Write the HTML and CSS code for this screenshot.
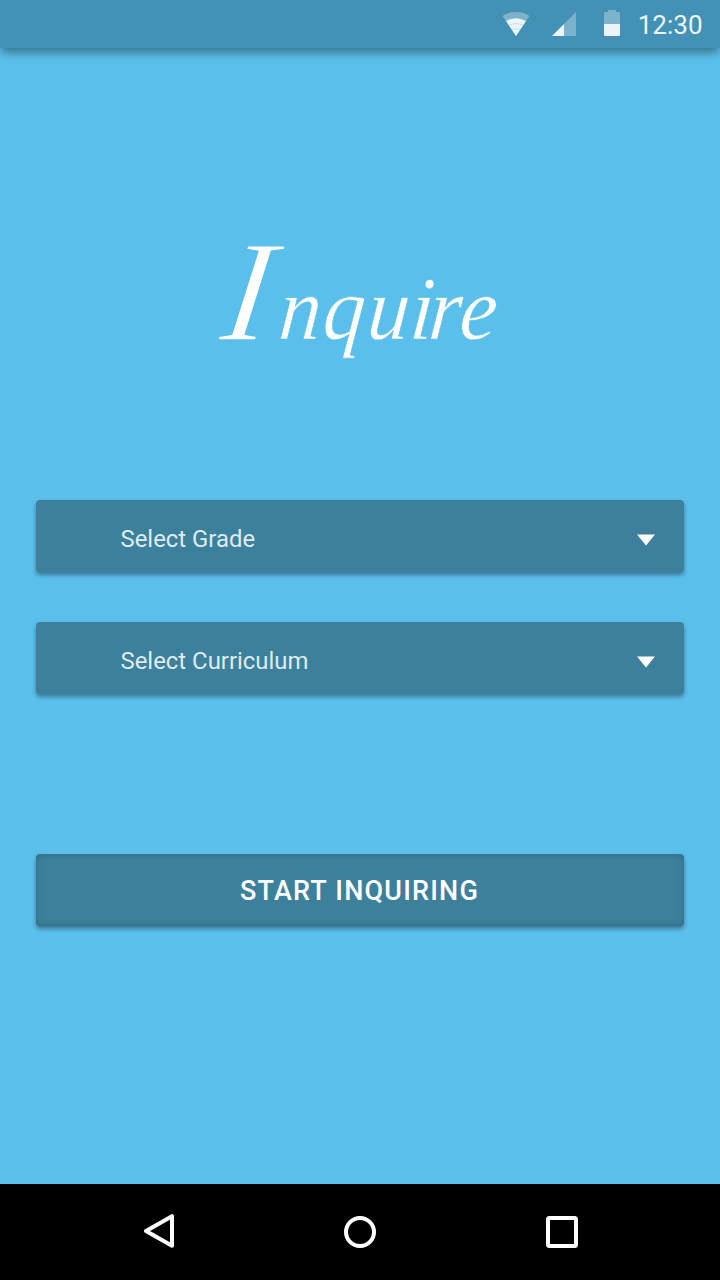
FILE: index.html
```html
<!DOCTYPE html>
<html lang="en">
<head>
<meta charset="utf-8">
<title>Inquire</title>
<link rel="stylesheet" href="styles.css">
</head>
<body>
<div class="screen">
  <header class="status">
    <svg class="wifi" width="28" height="26" viewBox="0 0 28 26">
      <path class="dim" d="M0.5 6Q6 2 14 2T27.500 6L14 26Z"/>
      <path class="lit" d="M4 11Q14 5.500 24 11L14 26Z"/>
      <path class="arc" d="M7 15.200Q14 12 21 15.200M10 19.500Q14 17.500 18 19.500"/>
    </svg>
    <svg class="signal" width="24" height="24" viewBox="0 0 24 24">
      <path class="dim" d="M24 0V24H12V12Z"/>
      <path class="lit" d="M12 12V24H0Z"/>
    </svg>
    <svg class="battery" width="16" height="26" viewBox="0 0 16 26">
      <path class="dim" d="M4 0H12V2H14.500Q16 2 16 3.500V14H0V3.500Q0 2 1.500 2H4Z"/>
      <path class="lit" d="M0 14H16V24.500Q16 26 14.500 26H1.500Q0 26 0 24.500Z"/>
    </svg>
    <time class="clock">12:30</time>
  </header>
  <main class="content">
    <h1 class="brand">
      <svg class="wordmark" width="320" height="220" viewBox="200 190 320 220">
        <text class="initial" transform="translate(218.500 340) skewX(-8)">I</text>
        <text class="letters" transform="translate(277.500 339) skewX(-5) scale(.93 1)" x="0 47 95 141 161 194" y="0">nquire</text>
      </svg>
    </h1>
    <div class="selects">
      <button class="field">Select Grade<svg class="caret" width="18" height="12" viewBox="0 0 18 12"><path d="M0 .500H18L9 11.500Z"/></svg></button>
      <button class="field">Select Curriculum<svg class="caret" width="18" height="12" viewBox="0 0 18 12"><path d="M0 .500H18L9 11.500Z"/></svg></button>
    </div>
    <button class="start">START INQUIRING</button>
  </main>
  <nav class="navbar">
    <svg class="back" width="32" height="36" viewBox="0 0 32 36"><path d="M28 3.200V32.800L2 18Z"/></svg>
    <svg width="32" height="32" viewBox="0 0 32 32"><circle cx="16" cy="16" r="14"/></svg>
    <svg width="32" height="32" viewBox="0 0 32 32"><rect x="2" y="2" width="28" height="28" rx="1.500"/></svg>
  </nav>
</div>
</body>
</html>
```
FILE: styles.css
```css
* { box-sizing: border-box; }
body { margin: 0; font-family: Roboto, sans-serif; }
svg { display: block; flex: none; }
.screen {
  width: 720px;
  height: 1280px;
  display: flex;
  flex-direction: column;
  background: #5bbfec;
  overflow: hidden;
}
.status {
  height: 48px;
  display: flex;
  justify-content: flex-end;
  padding-right: 17.500px;
  background: #4392b5;
  box-shadow: 0 6px 9px -1px rgba(0, 0, 0, .38);
}
.wifi { margin: 10px 22px 0 0; }
.signal { margin: 12px 28px 0 0; }
.battery { margin: 10px 17.500px 0 0; }
.dim { fill: #fff; opacity: .3; }
.lit { fill: #ebf4f8; }
.arc { fill: none; stroke: #c9e0e9; stroke-width: 1; }
.clock { font-size: 26px; line-height: 50px; color: #ebf4f8; white-space: nowrap; }
.content {
  flex: 1;
  display: flex;
  flex-direction: column;
  padding: 142px 36px 0;
}
.brand { margin: 0 0 90px 164px; height: 220px; }
.wordmark { fill: #fff; font-family: "Liberation Serif", serif; font-style: italic; font-weight: 400; }
.initial { font-size: 144px; stroke: #5bbfec; stroke-width: 1.5; }
.letters { font-size: 90px; stroke: #5bbfec; stroke-width: .6; }
.selects { display: flex; flex-direction: column; gap: 50px; margin-bottom: 160px; }
.field, .start {
  height: 72px;
  width: 100%;
  border: 0;
  border-radius: 4px;
  background: #3d809b;
  font-family: inherit;
  box-shadow: 0 3px 4px rgba(0, 0, 0, .36);
}
.field {
  display: flex;
  align-items: center;
  justify-content: space-between;
  padding: 6px 29px 0 84.500px;
  font-size: 23.900px;
  color: #deebf0;
}
.caret { margin-top: 2px; fill: #fff; }
.start {
  padding: 1px 1px 0 0;
  color: #fff;
  font-size: 27px;
  font-weight: 500;
  letter-spacing: 1.200px;
  box-shadow: 0 3px 4px rgba(0, 0, 0, .36), inset 0 0 6px rgba(0, 0, 0, .2);
}
.navbar {
  height: 96px;
  display: flex;
  align-items: center;
  justify-content: space-between;
  padding: 0 142px;
  background: #000;
}
.navbar svg { fill: none; stroke: #fff; stroke-width: 4; stroke-linejoin: round; }
.navbar .back { margin: -2px -2px 0 2px; }
```
